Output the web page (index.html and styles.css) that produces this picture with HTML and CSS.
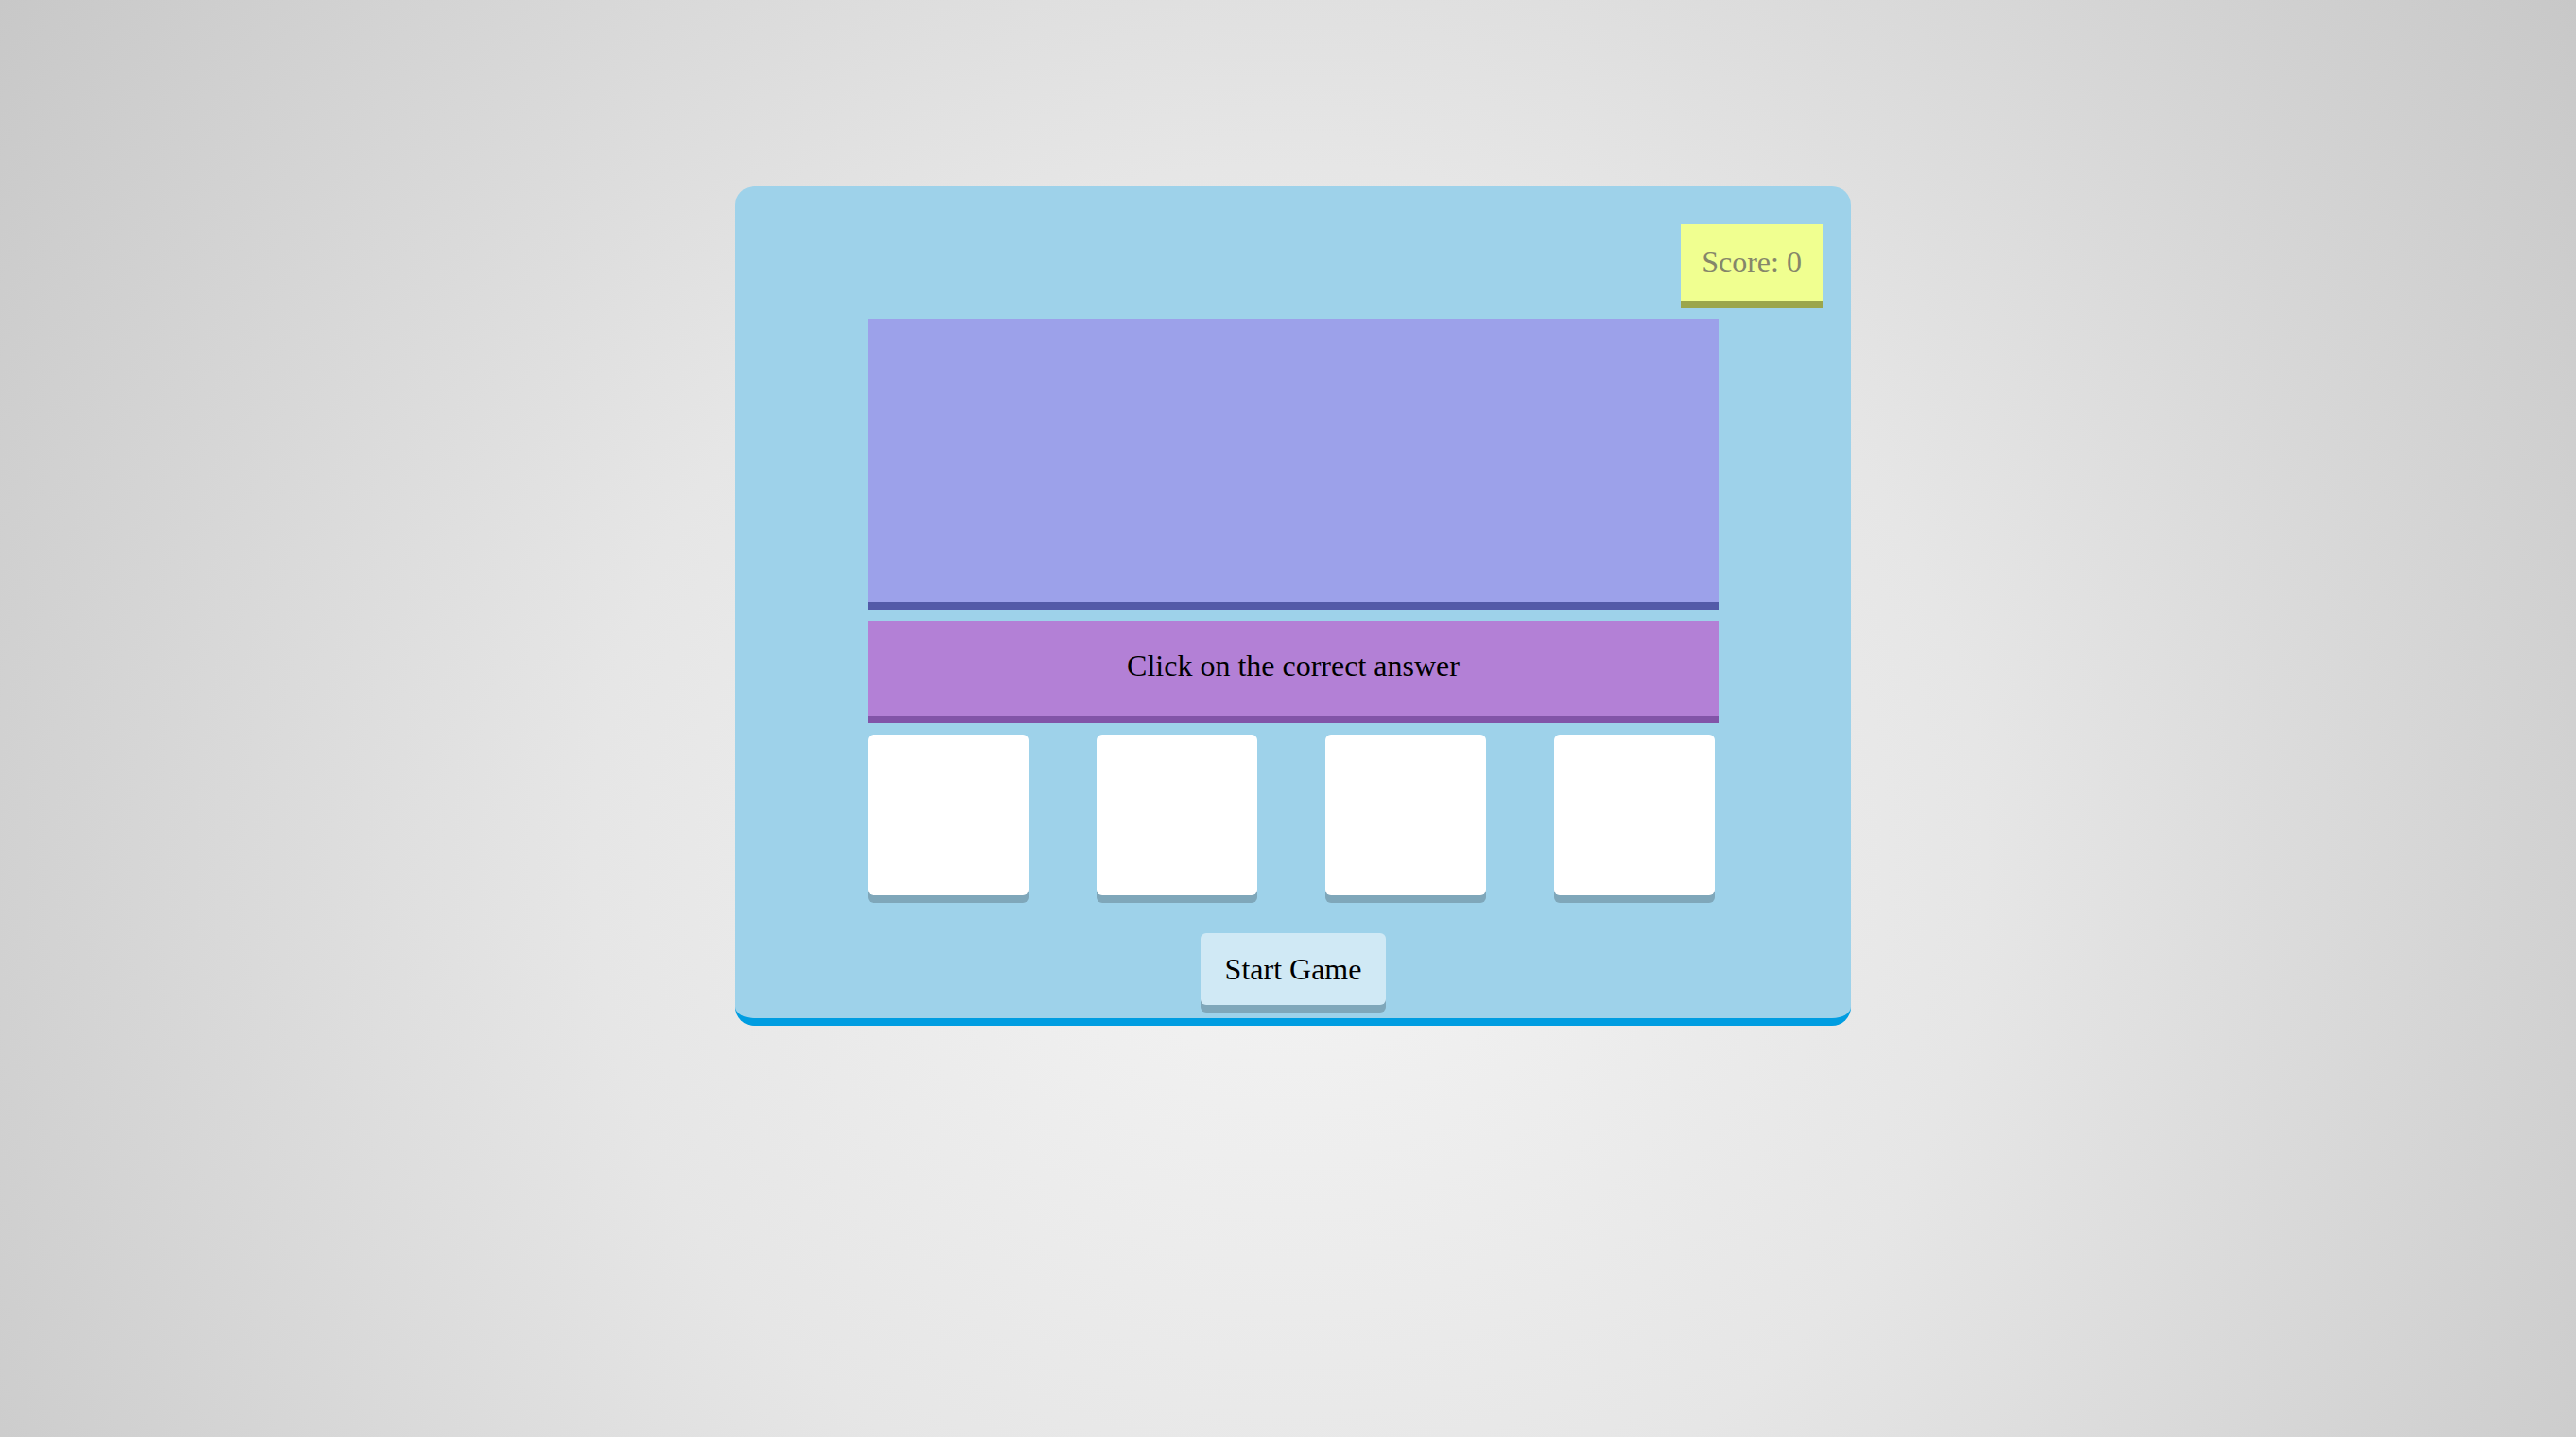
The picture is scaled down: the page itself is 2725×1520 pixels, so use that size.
FILE: index.html
```html
<!DOCTYPE html>
<html lang="en">
<head>
<meta charset="utf-8">
<title>Quiz Game</title>
<link rel="stylesheet" href="styles.css">
</head>
<body>
<div class="game">
  <div class="header">
    <div class="score">Score: 0</div>
  </div>
  <div class="question"></div>
  <div class="instruction">Click on the correct answer</div>
  <div class="choices">
    <div class="choice"></div>
    <div class="choice"></div>
    <div class="choice"></div>
    <div class="choice"></div>
  </div>
  <div class="actions">
    <button class="start">Start Game</button>
  </div>
</div>
</body>
</html>
```
FILE: styles.css
```css
html, body {
  margin: 0;
  padding: 0;
  height: 100%;
}
body {
  background: radial-gradient(circle at 50% 60%, #f4f4f4 0%, #e6e6e6 45%, #c8c8c8 100%);
  font-family: "Liberation Serif", "Times New Roman", serif;
  font-size: 32px;
  overflow: hidden;
}
.game {
  box-sizing: border-box;
  width: 1180px;
  height: 888px;
  margin: 197px 0 0 778px;
  background: #9ed2ea;
  border-bottom: 8px solid #009de1;
  border-radius: 20px;
  padding: 40px 140px 0 140px;
  display: flex;
  flex-direction: column;
}
.header {
  display: flex;
  justify-content: flex-end;
  margin-right: -110px;
  height: 89px;
}
.score {
  box-sizing: border-box;
  width: 150px;
  height: 89px;
  background: #f0ff90;
  border-bottom: 8px solid #9ba64c;
  color: #85866a;
  display: flex;
  align-items: center;
  justify-content: center;
}
.question {
  margin-top: 11px;
  height: 300px;
  background: #9ca1ea;
  border-bottom: 8px solid #535aa8;
}
.instruction {
  box-sizing: border-box;
  margin-top: 12px;
  height: 108px;
  padding-bottom: 6px;
  background: #b380d6;
  border-bottom: 8px solid #8254a8;
  display: flex;
  align-items: center;
  justify-content: center;
  color: #000;
}
.choices {
  margin-top: 12px;
  display: flex;
  gap: 72px;
}
.choice {
  width: 170px;
  height: 170px;
  background: #fff;
  border-radius: 6px;
  box-shadow: 0 8px 0 #7fa7ba;
}
.actions {
  margin-top: 40px;
  display: flex;
  justify-content: center;
}
.start {
  width: 196px;
  height: 76px;
  border: none;
  border-radius: 6px;
  background: #d0e9f5;
  box-shadow: 0 8px 0 #7fa7ba;
  font-family: "Liberation Serif", "Times New Roman", serif;
  font-size: 32px;
  color: #000;
  padding: 0;
  cursor: pointer;
}
```
